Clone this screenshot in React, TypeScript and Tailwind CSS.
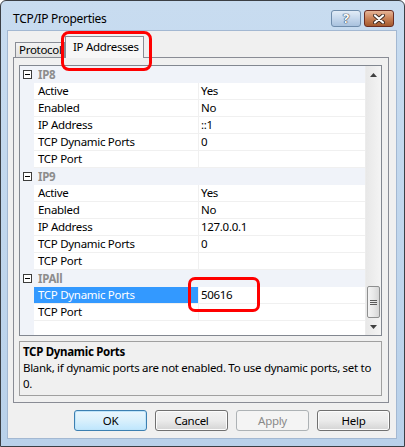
import React from 'react';

type Row = { name: string; value: string; selected?: boolean };
type Group = { name: string; rows: Row[] };

const groups: Group[] = [
  {
    name: 'IP8',
    rows: [
      { name: 'Active', value: 'Yes' },
      { name: 'Enabled', value: 'No' },
      { name: 'IP Address', value: '::1' },
      { name: 'TCP Dynamic Ports', value: '0' },
      { name: 'TCP Port', value: '' },
    ],
  },
  {
    name: 'IP9',
    rows: [
      { name: 'Active', value: 'Yes' },
      { name: 'Enabled', value: 'No' },
      { name: 'IP Address', value: '127.0.0.1' },
      { name: 'TCP Dynamic Ports', value: '0' },
      { name: 'TCP Port', value: '' },
    ],
  },
  {
    name: 'IPAll',
    rows: [
      { name: 'TCP Dynamic Ports', value: '50616', selected: true },
      { name: 'TCP Port', value: '' },
    ],
  },
];

const MinusBox = () => (
  <div className="w-[9px] h-[9px] border border-[#3c3c3c] bg-white flex items-center justify-center">
    <div className="w-[5px] h-[1px] bg-black" />
  </div>
);

const PropertyRow = ({ row }: { row: Row }) => (
  <div className="flex h-[17px]">
    <div className="w-[14px] bg-[#f0f3f9]" />
    <div
      className={
        row.selected
          ? 'w-[165px] pl-[4px] bg-[#3399ff] text-white leading-[16px] border-b border-r border-[#f0f0f0]'
          : 'w-[165px] pl-[4px] bg-white leading-[16px] border-b border-r border-[#f0f0f0]'
      }
    >
      {row.name}
    </div>
    <div className="flex-1 pl-[2px] bg-white leading-[16px] border-b border-[#f0f0f0]">{row.value}</div>
  </div>
);

const Scrollbar = () => (
  <div className="w-[16px] flex flex-col bg-gradient-to-r from-[#e8e8e8] to-[#f4f4f4] border-l border-[#ececec]">
    <div className="h-[17px] flex items-center justify-center">
      <svg width="7" height="4" viewBox="0 0 7 4">
        <path d="M0 4 L3.5 0 L7 4 Z" fill="#404040" />
      </svg>
    </div>
    <div className="flex-1" />
    <div className="h-[32px] mx-[1px] rounded-[2px] border border-[#8e8f8f] bg-gradient-to-r from-[#f4f4f4] via-[#e8e8e8] to-[#d6d6d6] flex flex-col items-center justify-center gap-[1px]">
      <div className="w-[7px] h-[1px] bg-[#5a5a5a]" />
      <div className="w-[7px] h-[1px] bg-[#5a5a5a]" />
      <div className="w-[7px] h-[1px] bg-[#5a5a5a]" />
    </div>
    <div className="h-[17px] flex items-center justify-center">
      <svg width="7" height="4" viewBox="0 0 7 4">
        <path d="M0 0 L3.5 4 L7 0 Z" fill="#404040" />
      </svg>
    </div>
  </div>
);

const Button = ({ label, primary, disabled }: { label: string; primary?: boolean; disabled?: boolean }) => {
  let cls = 'w-[73px] h-[21px] rounded-[3px] flex items-center justify-center border ';
  if (disabled) cls += 'border-[#adb2b5] bg-[#f4f4f4] text-[#8a8a8a]';
  else if (primary) cls += 'border-[#3c7fb1] bg-gradient-to-b from-[#eaf6fd] via-[#d9f0fc] to-[#bee6fd] shadow-[inset_0_0_0_1px_#bfe4f9] text-black';
  else cls += 'border-[#707070] bg-gradient-to-b from-[#f2f2f2] via-[#ebebeb] to-[#d4d4d4] shadow-[inset_0_0_0_1px_#fcfcfc] text-black';
  return <div className={cls}>{label}</div>;
};

export default function App() {
  return (
    <div className="w-[405px] h-[447px] font-['Noto_Sans',sans-serif] text-[11.5px] tracking-[-0.3px] text-black bg-white">
      <div className="w-[405px] h-[447px] flex flex-col rounded-t-[6px] border border-[#3b3f45] bg-gradient-to-b from-[#c8dcf0] to-[#b9d1ea]">
        {/* Title bar */}
        <div className="h-[29px] flex items-start">
          <div className="pl-[12px] pt-[8px] leading-[20px] text-[12px]">TCP/IP Properties</div>
          <div className="ml-auto flex gap-[3px] pt-[9px] pr-[10px]">
            <div className="w-[30px] h-[17px] rounded-[3px] border border-[#6f8cab] bg-gradient-to-b from-[#e2ecf7] via-[#c5d7ec] to-[#a9c2de] flex items-center justify-center">
              <span className="text-white font-bold text-[13px] leading-none [text-shadow:0_0_1px_#2d3b4d,0_0_1px_#2d3b4d,0_0_1px_#2d3b4d]">?</span>
            </div>
            <div className="w-[30px] h-[17px] rounded-[3px] border border-[#6b2d22] bg-gradient-to-b from-[#e6b597] via-[#c98157] to-[#a35a2e] flex items-center justify-center">
              <svg width="12" height="10" viewBox="0 0 12 10">
                <path d="M2 1.5 L10 8.5 M10 1.5 L2 8.5" stroke="#3d2a22" strokeWidth="4" strokeLinecap="round" />
                <path d="M2 1.5 L10 8.5 M10 1.5 L2 8.5" stroke="#ffffff" strokeWidth="2.2" strokeLinecap="round" />
              </svg>
            </div>
          </div>
        </div>

        {/* Client area */}
        <div className="ml-[6px] mr-[7px] mb-[7px] flex-1 flex flex-col bg-[#f0f0f0] border border-[#a3b8d2]">
          <div className="relative">
            {/* Tabs */}
            <div className="mt-[5px] ml-[5px] pl-[2px] h-[21px] flex items-end">
              <div className="w-[50px] h-[15px] border border-b-0 border-[#898c95] bg-gradient-to-b from-[#f3f3f3] to-[#e1e1e1] pl-[3px] leading-[14px] overflow-hidden whitespace-nowrap">
                Protocol
              </div>
              <div className="relative z-10 -mb-[1px] w-[79px] h-[22px] border border-b-0 border-[#898c95] bg-[#f7f7f7] pl-[7px] leading-[20px]">
                IP Addresses
              </div>
            </div>
            {/* Tab panel */}
            <div className="ml-[5px] w-[376px] h-[346px] border border-[#898c95] flex flex-col pl-[5px] pt-[7px]">
              <div className="w-[363px] h-[271px] border border-[#828790] flex bg-white">
                <div className="flex-1 flex flex-col">
                  {groups.map((g) => (
                    <div key={g.name}>
                      <div className="flex h-[17px] bg-[#f0f3f9] items-center">
                        <div className="w-[14px] pl-[3px] flex items-center">
                          <MinusBox />
                        </div>
                        <div className="pl-[4px] font-bold text-[#8d8d8d] leading-[16px]">{g.name}</div>
                      </div>
                      {g.rows.map((r, i) => (
                        <PropertyRow key={i} row={r} />
                      ))}
                    </div>
                  ))}
                  <div className="flex-1 flex">
                    <div className="w-[14px] bg-[#f0f3f9]" />
                  </div>
                </div>
                <Scrollbar />
              </div>
              <div className="mt-[5px] w-[363px] h-[55px] border border-[#a0a0a0] pl-[3px] pt-[2px]">
                <div className="font-bold leading-[16px]">TCP Dynamic Ports</div>
                <div className="leading-[16px] whitespace-nowrap">
                  Blank, if dynamic ports are not enabled. To use dynamic ports, set to
                  <br />
                  0.
                </div>
              </div>
            </div>

            {/* Annotation boxes */}
            <div className="absolute left-[53px] top-[0px] w-[91px] h-[40px] rounded-[8px] border-[3px] border-[#ff0000]" />
            <div className="absolute left-[180px] top-[246px] w-[72px] h-[35px] rounded-[7px] border-[3px] border-[#ff0000]" />
          </div>

          {/* Buttons */}
          <div className="mt-[7px] flex justify-end gap-[8px] pr-[6px]">
            <Button label="OK" primary />
            <Button label="Cancel" />
            <Button label="Apply" disabled />
            <Button label="Help" />
          </div>
        </div>
      </div>
    </div>
  );
}
